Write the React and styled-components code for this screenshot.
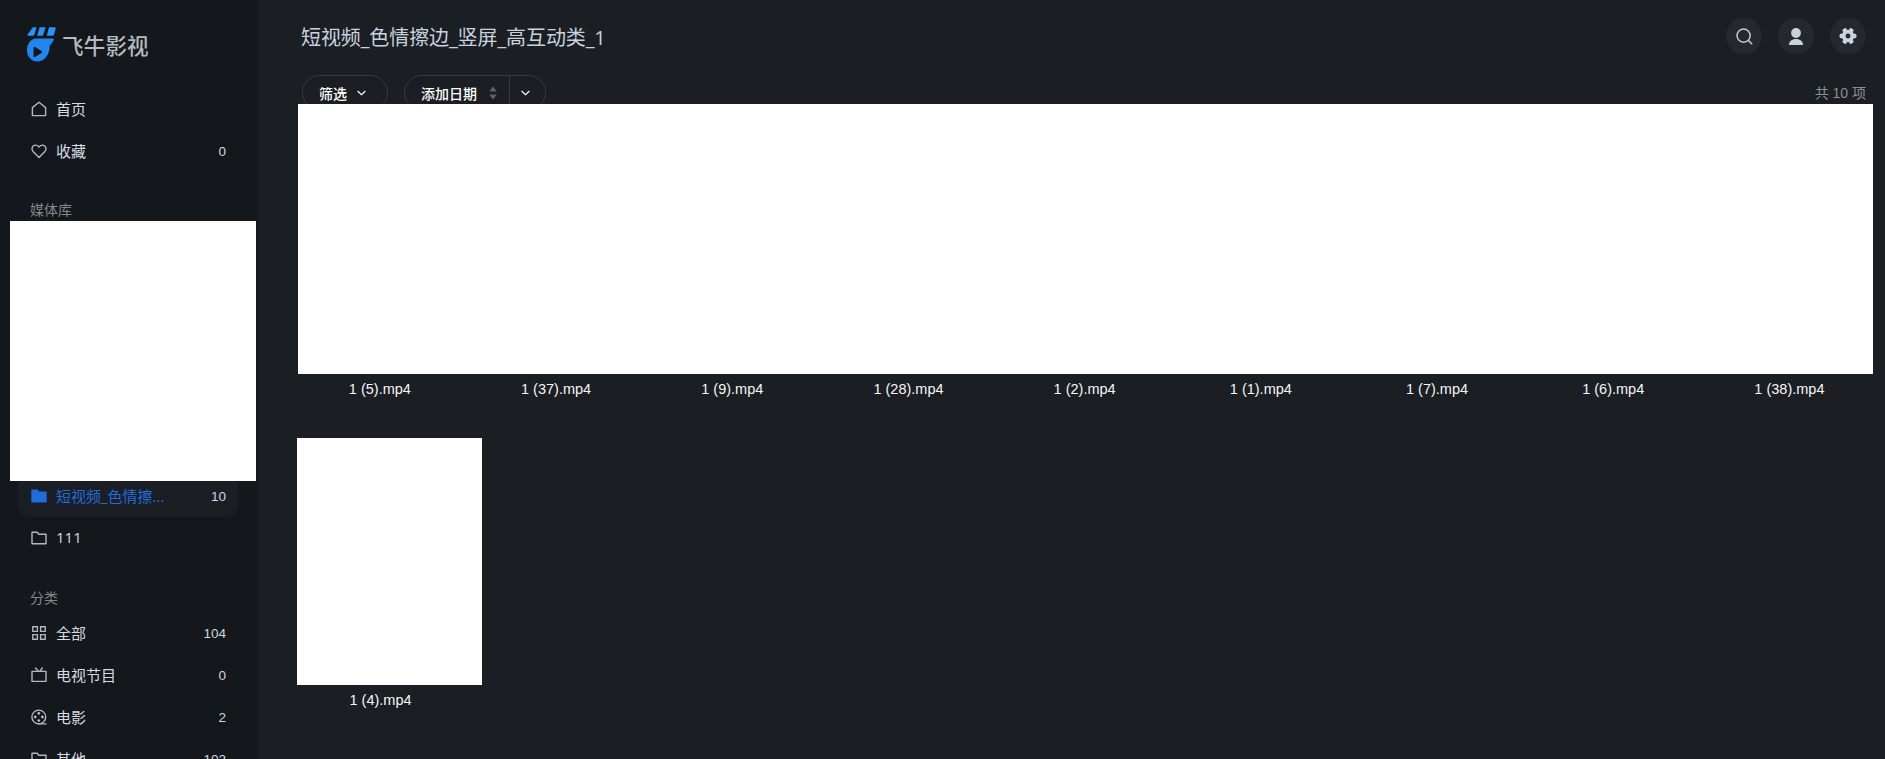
import styled, { createGlobalStyle } from "styled-components"

const GlobalStyle = createGlobalStyle`
    html, body {
        margin: 0;
        padding: 0;
        height: 100%;
        overflow: hidden;
        background: #1b1e23;
        font-family: "Liberation Sans", "Noto Sans CJK SC", sans-serif;
    }
`
const Container = styled.div`
    display: flex;
    width: 100vw;
    height: 100vh;
    overflow: hidden;
`
const Sidebar = styled.aside`
    flex: 0 0 258px;
    height: 100%;
    padding: 27px 20px 0 18px;
    box-sizing: border-box;
    background: #14171b;
    overflow: hidden;
`
const Brand = styled.div`
    display: flex;
    align-items: center;
    gap: 6px;
    height: 34px;
    margin: 0 0 27px 9px;
`
const BrandName = styled.span`
    font-size: 21.5px;
    font-weight: 500;
    color: #b5bac0;
    letter-spacing: 0.2px;
    white-space: nowrap;
`
const NavRow = styled.div`
    display: flex;
    align-items: center;
    height: 42px;
    padding: 0 12px 0 13px;
    border-radius: 10px;
    font-family: "Open Sans", "Noto Sans CJK SC", sans-serif;
    font-size: 15px;
    color: ${(p) => (p.$active ? "#1f6ddb" : "#d5dbe4")};
    background: ${(p) => (p.$active ? "#1b1e24" : "transparent")};
`
const NavIcon = styled.svg`
    flex: 0 0 16px;
    width: 16px;
    height: 16px;
    margin-right: 9px;
    fill: ${(p) => (p.$solid ? "#1f6ddb" : "none")};
    stroke: ${(p) => (p.$solid ? "#1f6ddb" : "#b4b8bd")};
    stroke-width: 1.4;
`
const NavLabel = styled.span`
    flex: 1;
    padding-bottom: 2px;
    white-space: nowrap;
`
const NavCount = styled.span`
    font-family: "Liberation Sans", sans-serif;
    color: #cfd6e0;
    font-size: 13.5px;
`
const SectionTitle = styled.div`
    height: 20px;
    line-height: 20px;
    padding-left: 12px;
    font-size: 14px;
    color: #84888d;
    margin-top: ${(p) => p.$gap}px;
    margin-bottom: ${(p) => p.$after}px;
`
const SideMask = styled.div`
    position: relative;
    z-index: 2;
    height: 260px;
    margin: 0 -18px -6px -8px;
    background: #ffffff;
`
const Main = styled.main`
    flex: 1;
    min-width: 0;
    height: 100%;
    overflow: hidden;
`
const TopBar = styled.header`
    display: flex;
    align-items: center;
    justify-content: space-between;
    height: 36px;
    padding: 18px 19px 0 43px;
`
const Title = styled.h1`
    margin: 0;
    font-family: "Open Sans", "Noto Sans CJK SC", sans-serif;
    font-size: 20px;
    font-weight: 400;
    letter-spacing: -0.1px;
    color: #c9d2df;
    white-space: nowrap;
`
const TopActions = styled.div`
    display: flex;
    gap: 16px;
`
const RoundButton = styled.div`
    display: flex;
    align-items: center;
    justify-content: center;
    width: 36px;
    height: 36px;
    border-radius: 50%;
    background: #25282d;
`
const Toolbar = styled.div`
    display: flex;
    align-items: flex-start;
    height: 29px;
    margin-top: 21px;
    padding: 0 19px 0 44px;
`
const Pill = styled.div`
    display: flex;
    align-items: stretch;
    height: 35px;
    box-sizing: border-box;
    margin-right: 16px;
    border: 1px solid #36393e;
    border-radius: 18px;
    font-family: "Noto Sans CJK SC", sans-serif;
    font-size: 14px;
    font-weight: 500;
    color: #ffffff;
`
const PillPart = styled.div`
    display: flex;
    align-items: center;
    gap: ${(p) => p.$gap || 0}px;
    width: ${(p) => p.$width}px;
    padding-left: ${(p) => p.$pad}px;
    box-sizing: border-box;
    & + & {
        border-left: 1px solid #36393e;
    }
`
const Total = styled.div`
    margin-left: auto;
    line-height: 36px;
    font-size: 14px;
    color: #8c9094;
    white-space: nowrap;
`
const TopBand = styled.div`
    position: relative;
    z-index: 2;
    height: 270px;
    margin: 0 12px 0 40px;
    background: #ffffff;
`
const LabelRow = styled.div`
    display: grid;
    grid-template-columns: repeat(9, 167px);
    column-gap: 9.2px;
    padding-left: 38.4px;
`
const FileName = styled.div`
    height: 30px;
    line-height: 30px;
    text-align: center;
    font-size: 14.5px;
    color: #f4f6f8;
    white-space: nowrap;
`
const SecondRow = styled.div`
    width: 185px;
    margin: 34px 0 0 39px;
`
const Thumb = styled.div`
    height: 247px;
    background: #ffffff;
`
const SingleName = styled(FileName)`
    width: 167px;
`

const names = ["1 (5).mp4", "1 (37).mp4", "1 (9).mp4", "1 (28).mp4", "1 (2).mp4", "1 (1).mp4", "1 (7).mp4", "1 (6).mp4", "1 (38).mp4"]

const Logo = () => (
    <svg width="29" height="35" viewBox="0 0 29 35" fill="none">
        <path d="M5 1.5c.4-.8 1-1.2 1.9-1.2H9.6L7.4 7.6c-.2.8-.9 1.2-1.7 1.2H1.6C.6 8.8.2 8 .7 7.2z" fill="#2b93f2" />
        <path d="M12.6.3h6l-2.3 7.2c-.3.8-.9 1.3-1.7 1.3H10.2z" fill="#2b93f2" />
        <path d="M22 .3h5.4c1 0 1.5.7 1.2 1.6l-1.6 5.5c-.3.9-.9 1.4-1.8 1.4H19.8z" fill="#2b93f2" />
        <path d="M9 11.5H26c.8 0 1.1.5.8 1.1C25.5 15.8 24 17.8 22.5 19c.3 1.5.2 3-.3 4.5C20.8 30 16 34.5 10.5 34.5 4.5 34.5 0 29.8 0 23.5 0 16.8 4 11.5 9 11.5z" fill="#1f86ee" />
        <path d="M6.5 21c0-.8.8-1.3 1.5-.9l6.5 4c.7.4.7 1.4 0 1.8l-6.5 4c-.7.4-1.5-.1-1.5-.9z" fill="#14171b" />
    </svg>
)

const HomeIcon = () => (
    <NavIcon viewBox="0 0 16 16"><path d="M8 1.2 14.6 6.6V14.6H1.4V6.6z" strokeLinejoin="round" /></NavIcon>
)
const HeartIcon = () => (
    <NavIcon viewBox="0 0 16 16"><path d="M8 14.4 2.1 8.4C.6 6.8.7 4.4 2.2 3c1.5-1.3 3.9-1.1 5.2.4l.6.7.6-.7c1.3-1.5 3.7-1.7 5.2-.4 1.5 1.4 1.6 3.8.1 5.4z" strokeLinejoin="round" /></NavIcon>
)
const FolderIcon = ({ solid }) => (
    <NavIcon viewBox="0 0 16 16" $solid={solid}>
        <path d="M1 2.2h5.2l1.6 2h7.2v9.6H1z" strokeLinejoin="round" />
    </NavIcon>
)
const GridIcon = () => (
    <NavIcon viewBox="0 0 16 16">
        <path d="M1.8 1.8h4.6v4.6H1.8zM9.6 1.8h4.6v4.6H9.6zM1.8 9.6h4.6v4.6H1.8zM9.6 9.6h4.6v4.6H9.6z" />
    </NavIcon>
)
const TvIcon = () => (
    <NavIcon viewBox="0 0 16 16">
        <path d="M1 4.4h14v10H1zM4.6 1 7.2 4.2M11.4 1 8.8 4.2" strokeLinejoin="round" strokeLinecap="round" />
    </NavIcon>
)
const ReelIcon = () => (
    <NavIcon viewBox="0 0 16 16">
        <circle cx="7.8" cy="8" r="6.9" />
        <path d="M7.8 14.9H15" strokeLinecap="round" />
        <g fill="#b4b8bd" stroke="none">
            <circle cx="7.8" cy="4.4" r="1.4" />
            <circle cx="7.8" cy="11.6" r="1.4" />
            <circle cx="4.2" cy="8" r="1.4" />
            <circle cx="11.4" cy="8" r="1.4" />
        </g>
    </NavIcon>
)
const Chevron = () => (
    <svg width="9" height="6" viewBox="0 0 9 6" fill="none" stroke="#ffffff" strokeWidth="1.2">
        <path d="M.6 1l3.9 3.6L8.4 1" />
    </svg>
)
const SortArrows = () => (
    <svg width="8" height="14" viewBox="0 0 8 14" fill="#5d6268">
        <path d="M4 .6 7.8 5.6H.2zM4 13.4.2 8.4h7.6z" />
    </svg>
)

const App = () => {
    return (
        <Container>
            <GlobalStyle />
            <Sidebar>
                <Brand>
                    <Logo />
                    <BrandName>飞牛影视</BrandName>
                </Brand>
                <NavRow><HomeIcon /><NavLabel>首页</NavLabel></NavRow>
                <NavRow><HeartIcon /><NavLabel>收藏</NavLabel><NavCount>0</NavCount></NavRow>
                <SectionTitle $gap={28} $after={1}>媒体库</SectionTitle>
                <SideMask />
                <NavRow $active><FolderIcon solid /><NavLabel>短视频_色情擦...</NavLabel><NavCount>10</NavCount></NavRow>
                <NavRow><FolderIcon /><NavLabel>111</NavLabel></NavRow>
                <SectionTitle $gap={29} $after={4}>分类</SectionTitle>
                <NavRow><GridIcon /><NavLabel>全部</NavLabel><NavCount>104</NavCount></NavRow>
                <NavRow><TvIcon /><NavLabel>电视节目</NavLabel><NavCount>0</NavCount></NavRow>
                <NavRow><ReelIcon /><NavLabel>电影</NavLabel><NavCount>2</NavCount></NavRow>
                <NavRow><FolderIcon /><NavLabel>其他</NavLabel><NavCount>102</NavCount></NavRow>
            </Sidebar>
            <Main>
                <TopBar>
                    <Title>短视频_色情擦边_竖屏_高互动类_1</Title>
                    <TopActions>
                        <RoundButton>
                            <svg width="17" height="17" viewBox="0 0 17 17" fill="none" stroke="#c3cad4" strokeWidth="1.5">
                                <circle cx="7.6" cy="7.6" r="6.6" />
                                <path d="M12.6 12.6l3.6 3.6" />
                            </svg>
                        </RoundButton>
                        <RoundButton>
                            <svg width="14" height="17" viewBox="0 0 14 17" fill="#c9d1dc">
                                <circle cx="7" cy="5" r="4.9" />
                                <path d="M0 17c0-3.6 2.8-6 7-6s7 2.4 7 6z" />
                            </svg>
                        </RoundButton>
                        <RoundButton>
                            <svg width="18" height="18" viewBox="0 0 18 18" fill="#c9d1dc">
                                <circle cx="9" cy="9" r="6.2" />
                                <g>
                                    <rect x="0.6" y="6.8" width="16.8" height="4.4" rx="1.4" />
                                    <rect x="0.6" y="6.8" width="16.8" height="4.4" rx="1.4" transform="rotate(60 9 9)" />
                                    <rect x="0.6" y="6.8" width="16.8" height="4.4" rx="1.4" transform="rotate(120 9 9)" />
                                </g>
                                <circle cx="9" cy="9" r="2.4" fill="#25282d" />
                            </svg>
                        </RoundButton>
                    </TopActions>
                </TopBar>
                <Toolbar>
                    <Pill>
                        <PillPart $width={84} $pad={16} $gap={10}>筛选 <Chevron /></PillPart>
                    </Pill>
                    <Pill>
                        <PillPart $width={104} $pad={16} $gap={12}>添加日期 <SortArrows /></PillPart>
                        <PillPart $width={36} $pad={11}><Chevron /></PillPart>
                    </Pill>
                    <Total>共 10 项</Total>
                </Toolbar>
                <TopBand />
                <LabelRow>
                    {names.map((n) => (
                        <FileName key={n}>{n}</FileName>
                    ))}
                </LabelRow>
                <SecondRow>
                    <Thumb />
                    <SingleName>1 (4).mp4</SingleName>
                </SecondRow>
            </Main>
        </Container>
    )
}

export default App
